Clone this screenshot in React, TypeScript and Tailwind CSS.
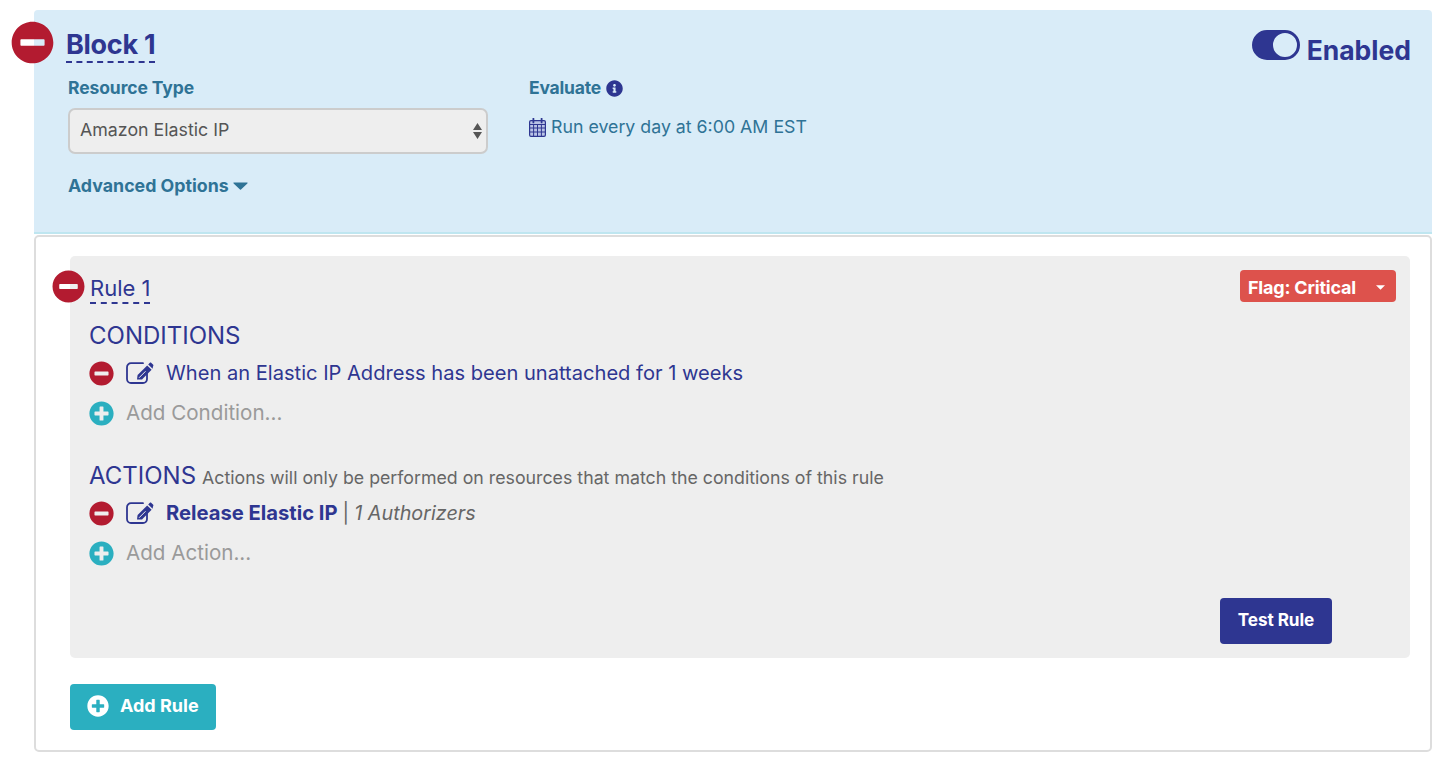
import React from 'react';
import { FaMinusCircle, FaPlusCircle, FaInfoCircle } from 'react-icons/fa';

const EditIcon = () => (
    <svg viewBox="0 0 28 22" className="w-[28px] h-[22px] ml-[12px] shrink-0 text-[#2e3691]">
        <path d="M17 1.2H5A4 4 0 0 0 1 5.2V17A4 4 0 0 0 5 21H17A4 4 0 0 0 21 17V11.5" fill="none" stroke="currentColor" strokeWidth="1.8" strokeLinecap="round" />
        <path d="M11 17.4L11.6 13L21.2 3.4L25.6 7.8L16 17.4Z" fill="currentColor" />
        <path d="M22.2 2.4L23.6 1C24.2 .4 24.8 .4 25.4 1L27 2.6C27.6 3.2 27.6 3.8 27 4.4L26.6 6.8Z" fill="currentColor" />
        <path d="M13 15.8L19.5 9.3" stroke="#eeeeee" strokeWidth="1" />
    </svg>
);

const CalendarIcon = () => (
    <svg viewBox="0 0 17 19" className="w-[17px] h-[19px] mr-[5px] shrink-0 text-[#2e3691]">
        <rect x="0.6" y="2.6" width="15.8" height="15.8" rx="1.4" fill="#b9c3e6" stroke="currentColor" strokeWidth="1.2" />
        <path d="M1 6.5H16M1 10H16M1 14H16M4.6 6.5V18M8.5 6.5V18M12.4 6.5V18" stroke="currentColor" strokeWidth="1" fill="none" />
        <path d="M4.4 .6V4.4M12.6 .6V4.4" stroke="currentColor" strokeWidth="1.8" strokeLinecap="round" />
    </svg>
);

const Caret = () => (
    <svg viewBox="0 0 15 8" className="w-[15px] h-[8px] ml-[4px] shrink-0">
        <path d="M1 .5H14C14.6 .5 14.8 1 14.4 1.4L8 7.6C7.7 7.9 7.3 7.9 7 7.6L.6 1.4C.2 1 .4 .5 1 .5Z" fill="currentColor" />
    </svg>
);

const RuleLine: React.FC<{ children: React.ReactNode }> = ({ children }) => (
    <div className="flex items-center h-[40px]">
        <FaMinusCircle className="w-[25px] h-[25px] text-[#b31b30] shrink-0" />
        <EditIcon />
        <div className="ml-[12px] text-[20.1px] text-[#2e3691]">{children}</div>
    </div>
);

const AddLine: React.FC<{ label: string }> = ({ label }) => (
    <div className="flex items-center h-[40px]">
        <FaPlusCircle className="w-[25px] h-[25px] text-[#2bafc0] shrink-0" />
        <span className="ml-[12px] text-[20.6px] text-[#9a9a9a]">{label}</span>
    </div>
);

export default function App() {
    return (
        <div className="w-[1450px] h-[770px] bg-white overflow-hidden pt-[10px] pl-[34px] pr-[18px] font-['Inter','Liberation_Sans',sans-serif]">
            {/* Block header */}
            <div className="h-[224px] bg-[#d9ecf8] border-b-2 border-[#bfe6f0] rounded-t-[4px] pl-[34px] pr-[21px] flex flex-col">
                <div className="flex justify-between">
                    <div className="flex items-start -ml-[57px] pt-[11px]">
                        <FaMinusCircle className="w-[43px] h-[43px] text-[#b31b30] shrink-0" />
                        <span className="ml-[12px] mt-[6px] h-[36px] leading-[36px] text-[27px] font-bold tracking-[-0.3px] text-[#2e3691] border-b-2 border-dashed border-[#2e3691]">Block 1</span>
                    </div>
                    <div className="flex items-center pt-[16px] h-[56px]">
                        <svg viewBox="0 0 48 30" className="w-[48px] h-[30px] -mt-[2px] text-[#2e3691]">
                            <path fillRule="evenodd" d="M15 0H33A15 15 0 0 1 33 30H15A15 15 0 0 1 15 0ZM33 3A12 12 0 1 0 33 27A12 12 0 1 0 33 3Z" fill="currentColor" />
                        </svg>
                        <span className="ml-[7px] text-[26.5px] font-bold text-[#2e3691] mt-[10px]">Enabled</span>
                    </div>
                </div>
                <div className="flex mt-[10px]">
                    <div className="w-[461px]">
                        <div className="text-[17.5px] font-bold tracking-[-0.1px] text-[#2f7396] leading-[24px]">Resource Type</div>
                        <div className="mt-[8px] w-[420px] h-[46px] bg-[#eeeeee] border-2 border-[#cccccc] rounded-[7px] flex items-center justify-between pl-[10px] pr-[4px]">
                            <span className="text-[17.8px] text-[#555555] pb-[2px]">Amazon Elastic IP</span>
                            <svg viewBox="0 0 9 16" className="w-[9px] h-[16px] text-[#555555]">
                                <path d="M4.5 0L9 7H0ZM0 9H9L4.5 16Z" fill="currentColor" />
                            </svg>
                        </div>
                        <div className="mt-[20px] flex items-center text-[17.8px] font-bold text-[#2f7396] leading-[24px]">
                            Advanced Options
                            <Caret />
                        </div>
                    </div>
                    <div>
                        <div className="flex items-center text-[17.5px] font-bold tracking-[-0.2px] text-[#2f7396] leading-[24px]">
                            Evaluate
                            <FaInfoCircle className="ml-[5px] w-[17px] h-[17px] text-[#2e3691]" />
                        </div>
                        <div className="mt-[15px] flex items-center text-[17.75px] text-[#2f7396] leading-[24px]">
                            <CalendarIcon />
                            Run every day at 6:00 AM EST
                        </div>
                    </div>
                </div>
            </div>

            {/* Rules card */}
            <div className="mt-[1px] h-[517px] bg-white border-2 border-[#dddddd] rounded-[5px] pt-[19px] pl-[34px] pr-[20px]">
                <div className="h-[402px] bg-[#eeeeee] rounded-[5px] pl-[19px] pr-[14px] flex flex-col">
                    <div className="flex justify-between items-start pt-[14px]">
                        <div className="flex items-start -ml-[37px]">
                            <FaMinusCircle className="w-[33px] h-[33px] text-[#b31b30] shrink-0" />
                            <span className="ml-[5px] mt-[4px] h-[30px] leading-[28px] text-[22px] text-[#2e3691] border-b-2 border-dashed border-[#2e3691]">Rule 1</span>
                        </div>
                        <div className="w-[156px] h-[32px] bg-[#dd524c] rounded-[4px] flex items-center justify-between pl-[8px] pr-[11px] text-white">
                            <span className="text-[18px] font-bold tracking-[-0.2px] pt-[2px]">Flag: Critical</span>
                            <svg viewBox="0 0 10 5" className="w-[9px] h-[5px] mt-[2px]">
                                <path d="M0 0H10L5 5Z" fill="currentColor" />
                            </svg>
                        </div>
                    </div>
                    <div className="mt-[17px] text-[24px] leading-[30px] text-[#2e3691]">CONDITIONS</div>
                    <div className="mt-[2px]">
                        <RuleLine>When an Elastic IP Address has been unattached for 1 weeks</RuleLine>
                        <AddLine label="Add Condition..." />
                    </div>
                    <div className="mt-[28px] flex items-baseline leading-[30px] text-[#2e3691]">
                        <span className="text-[24px]">ACTIONS</span>
                        <span className="ml-[6px] text-[17.75px] text-[#666666]">Actions will only be performed on resources that match the conditions of this rule</span>
                    </div>
                    <div>
                        <RuleLine>
                            <span className="font-bold text-[20.2px]">Release Elastic IP</span>
                            <span className="text-[#666666] text-[19.8px] ml-[5px]">|</span>
                            <em className="text-[#666666] text-[19.8px] ml-[5px]">1 Authorizers</em>
                        </RuleLine>
                        <AddLine label="Add Action..." />
                    </div>
                    <div className="flex justify-end mt-[25px] pr-[64px]">
                        <button className="w-[112px] h-[46px] bg-[#2e3691] rounded-[4px] text-white text-[17.2px] font-bold tracking-[-0.1px] pb-[3px]">Test Rule</button>
                    </div>
                </div>
                <button className="mt-[26px] w-[146px] h-[46px] bg-[#2bafc0] rounded-[4px] text-white flex items-center pl-[17px] pb-[3px]">
                    <FaPlusCircle className="w-[22px] h-[22px]" />
                    <span className="ml-[11px] text-[18px] font-bold">Add Rule</span>
                </button>
            </div>
        </div>
    );
}
